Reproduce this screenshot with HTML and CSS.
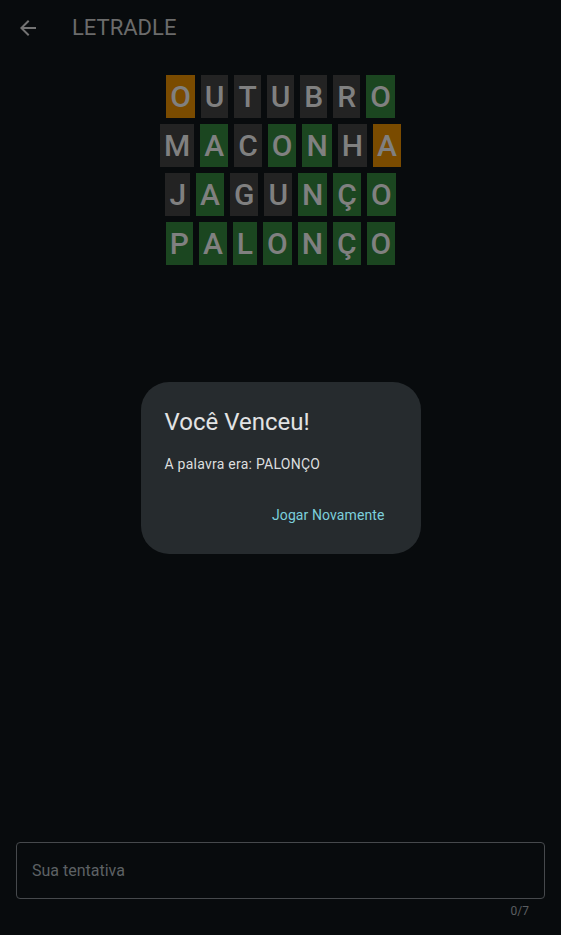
FILE: index.html
```html
<!DOCTYPE html>
<html lang="pt">
<head>
<meta charset="utf-8">
<title>LETRADLE</title>
<link rel="stylesheet" href="styles.css">
</head>
<body>
<div class="app">
  <header class="appbar">
    <span class="back">
      <svg viewBox="0 0 24 24" width="24" height="24"><path d="M20 11H7.83l5.59-5.59L12 4l-8 8 8 8 1.41-1.41L7.83 13H20v-2z" fill="currentColor"/></svg>
    </span>
    <h1 class="title">LETRADLE</h1>
  </header>

  <main class="board">
    <div class="row">
      <span class="tile present">O</span><span class="tile absent">U</span><span class="tile absent">T</span><span class="tile absent">U</span><span class="tile absent">B</span><span class="tile absent">R</span><span class="tile correct">O</span>
    </div>
    <div class="row">
      <span class="tile absent">M</span><span class="tile correct">A</span><span class="tile absent">C</span><span class="tile correct">O</span><span class="tile correct">N</span><span class="tile absent">H</span><span class="tile present">A</span>
    </div>
    <div class="row">
      <span class="tile absent">J</span><span class="tile correct">A</span><span class="tile absent">G</span><span class="tile absent">U</span><span class="tile correct">N</span><span class="tile correct">Ç</span><span class="tile correct">O</span>
    </div>
    <div class="row">
      <span class="tile correct">P</span><span class="tile correct">A</span><span class="tile correct">L</span><span class="tile correct">O</span><span class="tile correct">N</span><span class="tile correct">Ç</span><span class="tile correct">O</span>
    </div>
  </main>

  <footer class="entry">
    <div class="field"><span class="placeholder">Sua tentativa</span></div>
    <div class="counter">0/7</div>
  </footer>
</div>

<div class="overlay">
  <div class="dialog">
    <h2 class="dialog-title">Você Venceu!</h2>
    <p class="dialog-body">A palavra era: PALONÇO</p>
    <div class="dialog-actions">
      <button class="text-btn">Jogar Novamente</button>
    </div>
  </div>
</div>
</body>
</html>
```

FILE: styles.css
```css
* { box-sizing: border-box; }
html, body { margin: 0; padding: 0; height: 100%; }
body {
  background: #080b0d;
  font-family: Roboto, "Liberation Sans", sans-serif;
  overflow: hidden;
}
.app {
  height: 935px;
  display: flex;
  flex-direction: column;
}
.appbar {
  height: 56px;
  display: flex;
  align-items: center;
  padding-left: 16px;
}
.back {
  width: 24px;
  height: 24px;
  color: #737373;
  display: flex;
}
.title {
  margin: 0 0 0 32px;
  font-size: 22px;
  font-weight: 400;
  color: #6b6b6b;
  line-height: 28px;
}
.board {
  margin-top: 19px;
  display: flex;
  flex-direction: column;
  align-items: center;
  gap: 6px;
}
.row {
  display: flex;
  gap: 6px;
}
.tile {
  height: 43px;
  line-height: 43px;
  padding: 0 4px;
  font-size: 30px;
  font-weight: 500;
  color: #808080;
  text-align: center;
}
.absent { background: #232323; }
.correct { background: #1b4620; }
.present { background: #7a4b00; }

.entry {
  margin-top: auto;
  padding: 0 16px 12px;
}
.field {
  height: 57px;
  border: 1px solid #46494c;
  border-radius: 4px;
  display: flex;
  align-items: center;
  padding-left: 15px;
}
.placeholder {
  font-size: 16px;
  color: #5d6164;
}
.counter {
  text-align: right;
  padding-right: 16px;
  margin-top: 4px;
  font-size: 12px;
  line-height: 16px;
  color: #5b5e61;
  height: 20px;
}

.overlay {
  position: fixed;
  inset: 0;
  display: flex;
  align-items: center;
  justify-content: center;
}
.dialog {
  width: 280px;
  height: 172px;
  background: #262b2e;
  border-radius: 28px;
  padding: 24px 24px 19px;
  display: flex;
  flex-direction: column;
}
.dialog-title {
  margin: 0;
  font-size: 24px;
  line-height: 32px;
  font-weight: 400;
  color: #e2e3e4;
}
.dialog-body {
  margin: 16px 0 0;
  font-size: 14px;
  line-height: 20px;
  letter-spacing: 0.25px;
  color: #dcdedf;
}
.dialog-actions {
  margin-top: auto;
  display: flex;
  justify-content: flex-end;
}
.text-btn {
  height: 40px;
  padding: 0 12px;
  background: none;
  border: none;
  font-family: Roboto, "Liberation Sans", sans-serif;
  font-size: 14px;
  letter-spacing: 0.1px;
  color: #7ccfdc;
  cursor: pointer;
}
```
